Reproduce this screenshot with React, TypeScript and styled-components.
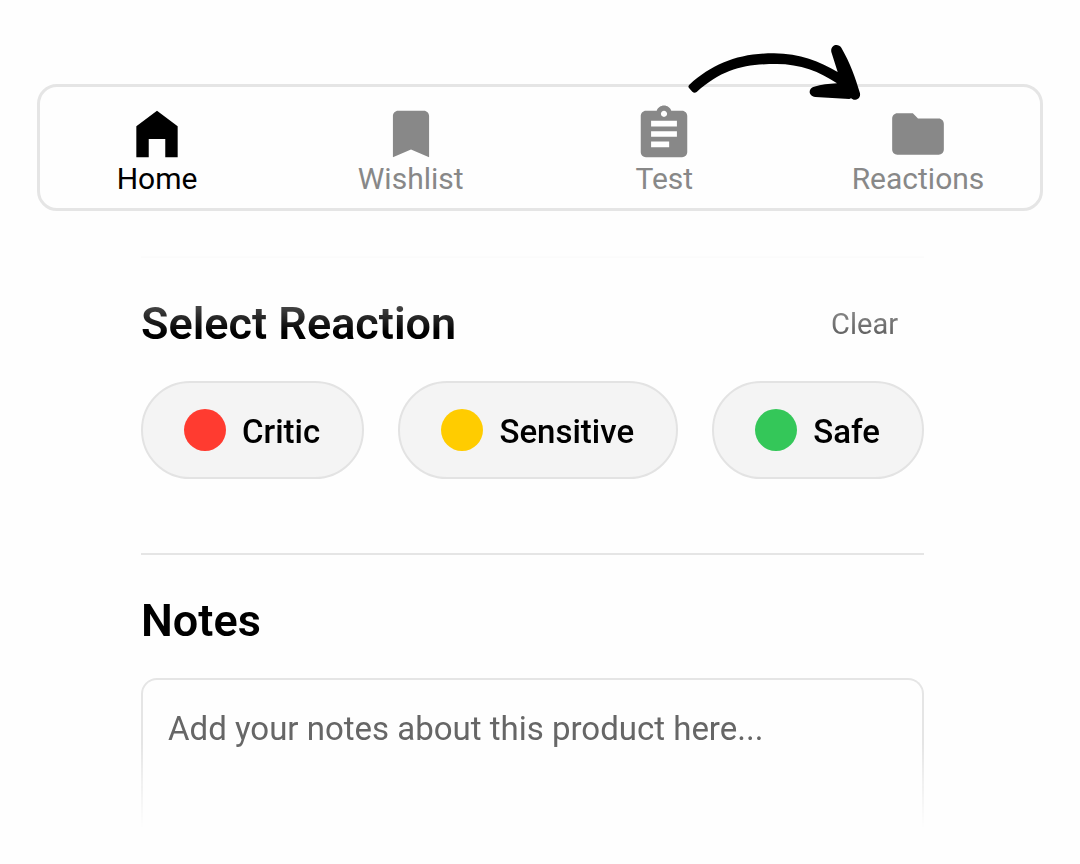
import React from 'react';
import styled, { createGlobalStyle } from 'styled-components';

const GlobalStyle = createGlobalStyle`
  * {
    box-sizing: border-box;
  }
  body {
    margin: 0;
    background: #fefefe;
    font-family: Roboto, 'Liberation Sans', sans-serif;
    color: #000;
  }
  button,
  textarea {
    font-family: inherit;
  }
`;

const Page = styled.div`
  padding: 84px 37px 36px;
`;

const TabBar = styled.nav`
  position: relative;
  display: flex;
  justify-content: space-between;
  padding: 16px 42px 11px 37px;
  border: 3px solid #e5e5e5;
  border-radius: 20px;
`;

const Tab = styled.button<{ $active?: boolean }>`
  display: flex;
  flex-direction: column;
  align-items: center;
  width: 160px;
  padding: 0;
  border: 0;
  background: none;
  color: ${({ $active }) => ($active ? '#000' : '#888')};
  cursor: pointer;
`;

const TabIcon = styled.svg`
  display: block;
  width: 62px;
  height: 62px;
  margin-bottom: -4px;
  fill: currentColor;
`;

const TabLabel = styled.span`
  font-size: 30px;
  line-height: 36px;
`;

const Arrow = styled.svg`
  position: absolute;
  top: -57px;
  right: 150px;
  width: 220px;
  height: 90px;
  pointer-events: none;
`;

const Content = styled.main`
  margin: 45px 119px 0 104px;
  border-top: 2px solid #e5e5e5;
  mask-image: linear-gradient(
    to bottom,
    rgba(0, 0, 0, 0.08) 0,
    rgba(0, 0, 0, 0.7) 48px,
    #000 76px,
    #000 calc(100% - 84px),
    transparent 100%
  );
`;

const Section = styled.section`
  & + & {
    margin-top: 74px;
    border-top: 2px solid #e5e5e5;
  }
`;

const SectionHeader = styled.div`
  display: flex;
  align-items: center;
  justify-content: space-between;
  padding: 40px 26px 31px 0;
`;

const Title = styled.h2`
  margin: 0;
  font-size: 45px;
  font-weight: 600;
  line-height: 52px;
`;

const ClearButton = styled.button`
  padding: 0;
  border: 0;
  background: none;
  color: #666;
  font-size: 29px;
  line-height: 36px;
  cursor: pointer;
`;

const Reactions = styled.div`
  display: flex;
  justify-content: space-between;
`;

const Reaction = styled.button`
  display: flex;
  align-items: center;
  gap: 16px;
  height: 98px;
  padding: 0 42px 0 41px;
  border: 2px solid #e3e3e3;
  border-radius: 49px;
  background: #f4f4f4;
  color: #000;
  font-size: 33px;
  font-weight: 500;
  line-height: 40px;
  cursor: pointer;
`;

const ReactionLabel = styled.span`
  padding-top: 4px;
`;

const Dot = styled.span<{ $color: string }>`
  width: 42px;
  height: 42px;
  border-radius: 50%;
  background: ${({ $color }) => $color};
`;

const NotesField = styled.textarea`
  display: block;
  width: 100%;
  height: 150px;
  padding: 29px 25px;
  border: 2px solid #e5e5e5;
  border-bottom: 0;
  border-radius: 16px 16px 0 0;
  outline: 0;
  background: transparent;
  resize: none;
  overflow: hidden;
  color: #000;
  font-size: 33px;
  line-height: 40px;

  &::placeholder {
    color: #666;
    opacity: 1;
  }
`;

const tabs = [
  { label: 'Home', active: true, path: 'M4 21V9l8-6 8 6v12h-4.8v-7.1H8.8V21z' },
  { label: 'Wishlist', path: 'M17 3H7c-1.1 0-2 .9-2 2v16l7-3 7 3V5c0-1.1-.9-2-2-2z' },
  {
    label: 'Test',
    path: 'M19 3h-4.18C14.4 1.84 13.3 1 12 1s-2.4.84-2.82 2H5c-1.1 0-2 .9-2 2v14c0 1.1.9 2 2 2h14c1.1 0 2-.9 2-2V5c0-1.1-.9-2-2-2zm-7 0c.66 0 1.2.54 1.2 1.2s-.54 1.2-1.2 1.2-1.2-.54-1.2-1.2.54-1.2 1.2-1.2zm2 14.1H7v-2.2h7v2.2zm3-4H7v-2.2h10v2.2zm0-4H7V6.9h10v2.2z',
  },
  {
    label: 'Reactions',
    path: 'M10 4H4c-1.1 0-2 .9-2 2v12c0 1.1.9 2 2 2h16c1.1 0 2-.9 2-2V8c0-1.1-.9-2-2-2h-8z',
  },
];

const reactions = [
  { label: 'Critic', color: '#ff3b30' },
  { label: 'Sensitive', color: '#ffcc00' },
  { label: 'Safe', color: '#34c759' },
];

export default function App() {
  return (
    <>
      <GlobalStyle />
      <Page>
        <TabBar aria-label="Main">
          {tabs.map((tab) => (
            <Tab key={tab.label} type="button" $active={tab.active}>
              <TabIcon viewBox="0 0 24 24" aria-hidden="true">
                <path d={tab.path} />
              </TabIcon>
              <TabLabel>{tab.label}</TabLabel>
            </Tab>
          ))}
          <Arrow viewBox="0 0 660 270" aria-hidden="true">
            <path d="M58 164C130 100 205 70 312 70C390 70 450 95 503 126L484 66C480 44 505 38 514 53C540 98 557 145 570 190C572 203 562 210 551 209L543 205L538 207L436 201C414 199 414 175 432 170C455 164 475 161 501 160C450 125 390 102 320 102C225 102 160 115 80 186Q73 191 67 185L57 174Q53 169 58 164Z" />
          </Arrow>
        </TabBar>
        <Content>
          <Section>
            <SectionHeader>
              <Title>Select Reaction</Title>
              <ClearButton type="button">Clear</ClearButton>
            </SectionHeader>
            <Reactions>
              {reactions.map((reaction) => (
                <Reaction key={reaction.label} type="button">
                  <Dot $color={reaction.color} />
                  <ReactionLabel>{reaction.label}</ReactionLabel>
                </Reaction>
              ))}
            </Reactions>
          </Section>
          <Section>
            <SectionHeader>
              <Title as="label" htmlFor="notes">
                Notes
              </Title>
            </SectionHeader>
            <NotesField id="notes" placeholder="Add your notes about this product here..." />
          </Section>
        </Content>
      </Page>
    </>
  );
}
